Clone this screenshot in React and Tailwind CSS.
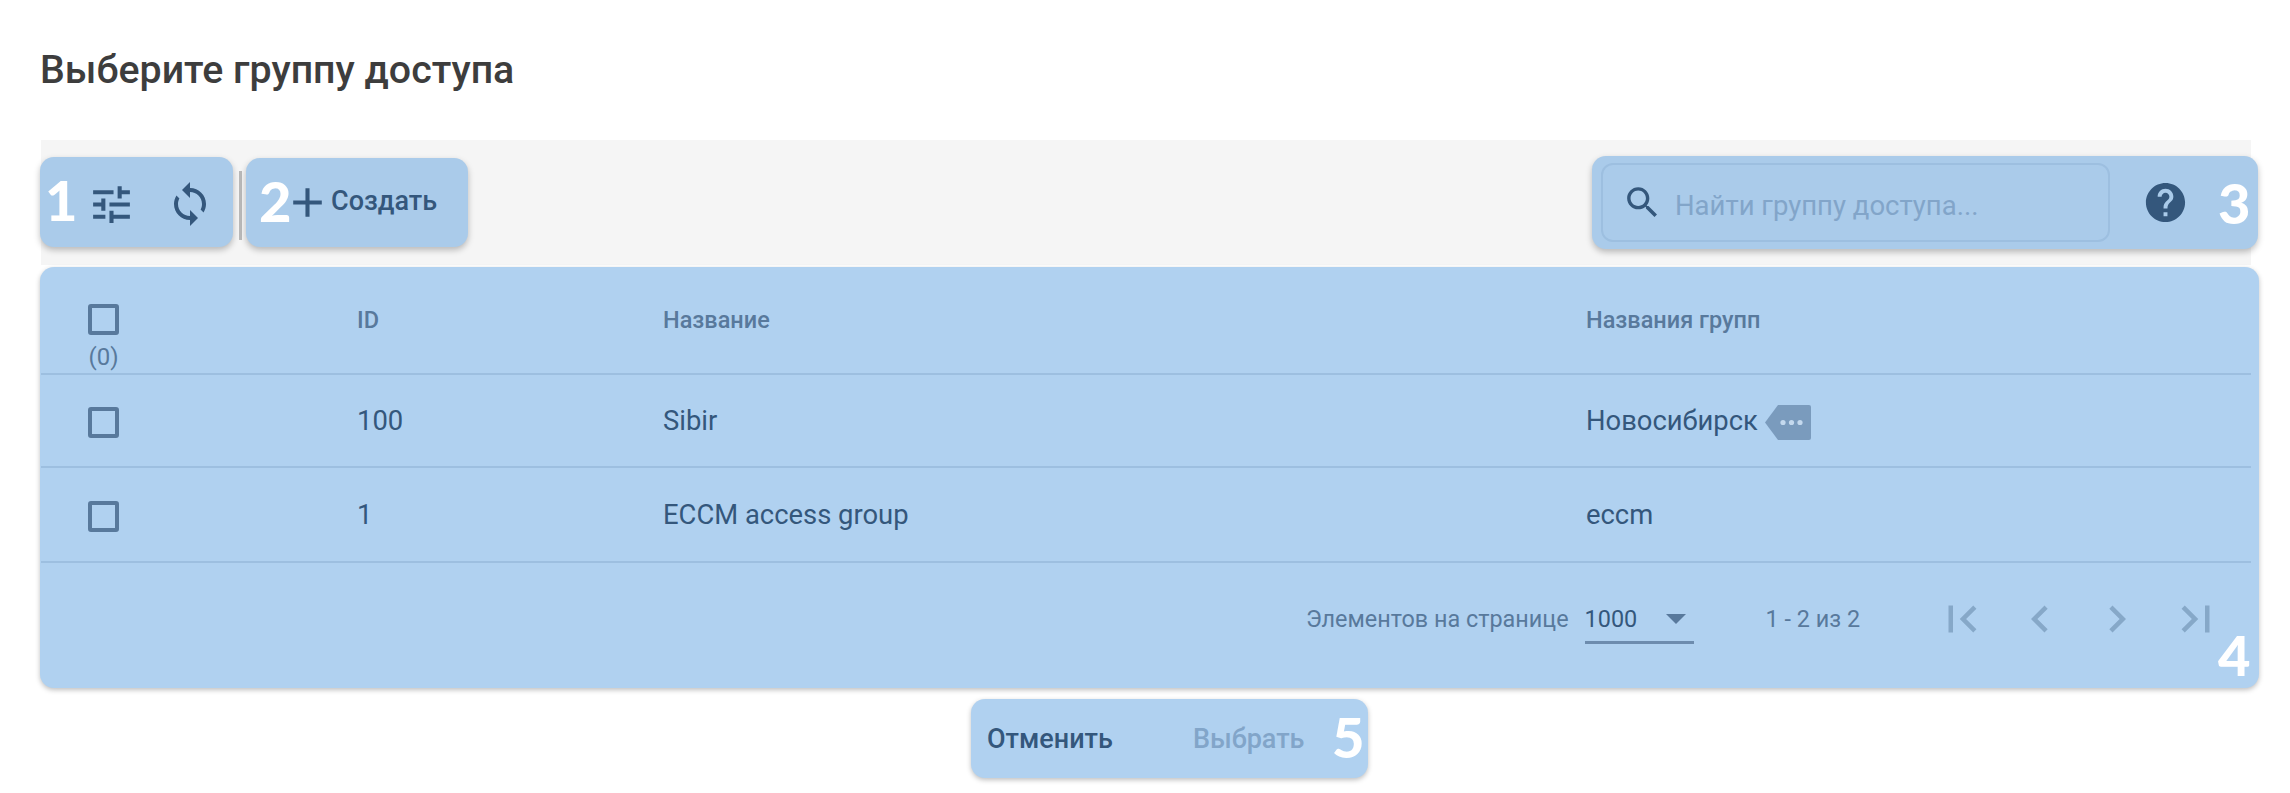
const ICONS = {
  tune: 'M3 17v2h6v-2H3zM3 5v2h10V5H3zm10 16v-2h8v-2h-8v-2h-2v6h2zM7 9v2H3v2h4v2h2V9H7zm14 4v-2H11v2h10zm-6-4h2V7h4V5h-4V3h-2v6z',
  sync: 'M12 4V1L8 5l4 4V6c3.31 0 6 2.69 6 6 0 1.01-.25 1.97-.7 2.8l1.46 1.46C19.54 15.03 20 13.57 20 12c0-4.42-3.58-8-8-8zm0 14c-3.31 0-6-2.69-6-6 0-1.01.25-1.97.7-2.8L5.24 7.74C4.46 8.97 4 10.43 4 12c0 4.42 3.58 8 8 8v3l4-4-4-4v3z',
  plus: 'M19 13h-6v6h-2v-6H5v-2h6V5h2v6h6v2z',
  search: 'M15.5 14h-.79l-.28-.27C15.41 12.59 16 11.11 16 9.5 16 5.91 13.09 3 9.5 3S3 5.91 3 9.5 5.91 16 9.5 16c1.61 0 3.09-.59 4.23-1.57l.27.28v.79l5 4.99L20.49 19l-4.99-5zm-6 0C7.01 14 5 11.99 5 9.5S7.01 5 9.5 5 14 7.01 14 9.5 11.99 14 9.5 14z',
  help: 'M12 2C6.48 2 2 6.48 2 12s4.48 10 10 10 10-4.48 10-10S17.52 2 12 2zm1 17h-2v-2h2v2zm2.07-7.75l-.9.92C13.45 12.9 13 13.5 13 15h-2v-.5c0-1.1.45-2.1 1.17-2.83l1.24-1.26c.37-.36.59-.86.59-1.41 0-1.1-.9-2-2-2s-2 .9-2 2H8c0-2.21 1.79-4 4-4s4 1.79 4 4c0 .88-.36 1.68-.93 2.25z',
  first: 'M18.41 16.59L13.82 12l4.59-4.59L17 6l-6 6 6 6zM6 6h2v12H6z',
  prev: 'M15.41 7.41L14 6l-6 6 6 6 1.41-1.41L10.83 12z',
  next: 'M10 6L8.59 7.41 13.17 12l-4.58 4.58L10 18l6-6z',
  last: 'M5.59 7.41L10.18 12l-4.59 4.59L7 18l6-6-6-6zM16 6h2v12h-2z',
}

function Icon({ name, className }) {
  return (
    <svg viewBox="0 0 24 24" fill="currentColor" className={className}>
      <path d={ICONS[name]} />
    </svg>
  )
}

function Num({ children, className }) {
  return (
    <span className={`absolute font-['Lato',sans-serif] font-black text-[56px] leading-none text-white ${className}`}>
      {children}
    </span>
  )
}

function Checkbox() {
  return <div className="w-[31px] h-[31px] rounded-[3px] border-[4px] border-[#58799c]" />
}

function Row({ id, name, groups, tag, last }) {
  return (
    <div className={`grid grid-cols-[316px_306px_923px_1fr] items-center text-[27.4px] text-[#34577c] border-b-2 border-[#9dbfe0] ${last ? 'h-[95px]' : 'h-[93px]'}`}>
      <div className="pl-[47px] mt-[4px]"><Checkbox /></div>
      <div className="mt-[2px]">{id}</div>
      <div className="mt-[2px]">{name}</div>
      <div className="flex items-center">
        <span className="mt-[2px]">{groups}</span>
        {tag && (
          <svg viewBox="0 0 46 35" className="w-[46px] h-[35px] ml-[7px] mt-[4px]">
            <path d="M13 0H44a2 2 0 0 1 2 2V33a2 2 0 0 1-2 2H13L0 17.5Z" fill="#7a9bbd" />
            <circle cx="18" cy="17.5" r="2.6" fill="#c4d9ee" />
            <circle cx="26.5" cy="17.5" r="2.6" fill="#c4d9ee" />
            <circle cx="35" cy="17.5" r="2.6" fill="#c4d9ee" />
          </svg>
        )}
      </div>
    </div>
  )
}

export default function App() {
  return (
    <div className="w-[2290px] h-[793px] overflow-hidden bg-white font-['Roboto',sans-serif] pl-[40px]">
      <h1 className="h-[140px] pt-[46px] text-[39.3px] leading-[48px] font-medium text-[#3d3d3d]">Выберите группу доступа</h1>

      <div className="w-[2210px] h-[125px] ml-px bg-[#f5f5f5] flex items-start pt-[17px]">
        <div className="relative -ml-px w-[193px] h-[90px] rounded-[14px] bg-[#aacbea] shadow-[0_3px_6px_rgba(0,0,0,0.25)] flex items-center text-[#34577c]">
          <Num className="left-[5px] top-[15px]">1</Num>
          <Icon name="tune" className="w-[49px] h-[49px] ml-[47px] mt-[5px]" />
          <Icon name="sync" className="w-[48px] h-[48px] ml-[30px] mt-[4px]" />
        </div>
        <div className="w-[3px] h-[69px] mt-[14px] ml-[6px] bg-[#b9b9b9]" />
        <div className="relative ml-[4px] mt-px w-[222px] h-[89px] rounded-[14px] bg-[#aacbea] shadow-[0_3px_6px_rgba(0,0,0,0.25)] flex items-center text-[#34577c]">
          <Num className="left-[13px] top-[15px]">2</Num>
          <Icon name="plus" className="w-[49px] h-[49px] ml-[37px] -mt-[1px] shrink-0" />
          <span className="-ml-px -mt-[2px] text-[27px] font-medium">Создать</span>
        </div>
        <div className="relative ml-auto -mr-[7px] w-[666px] h-[93px] -mt-px rounded-[14px] bg-[#aacbea] shadow-[0_3px_6px_rgba(0,0,0,0.25)] flex items-center text-[#34577c]">
          <div className="ml-[9px] w-[509px] h-[79px] rounded-[12px] border-2 border-[#9dbfe0] flex items-center">
            <Icon name="search" className="w-[41px] h-[41px] ml-[19px]" />
            <span className="ml-[12px] mt-[6px] text-[27.5px] text-[#82a5c9]">Найти группу доступа...</span>
          </div>
          <Icon name="help" className="w-[47px] h-[47px] ml-[32px]" />
          <Num className="left-[626px] top-[19px]">3</Num>
        </div>
      </div>

      <div className="relative mt-[2px] w-[2219px] h-[421px] rounded-[14px] bg-[#b0d1f0] shadow-[0_2px_5px_rgba(0,0,0,0.25)] pl-px pr-[8px]">
        <div className="grid grid-cols-[316px_306px_923px_1fr] h-[108px] border-b-2 border-[#9dbfe0] text-[23.5px] font-medium text-[#58799c]">
          <div className="pl-[47px] pt-[37px] relative">
            <Checkbox />
            <span className="absolute left-[47px] top-[72px] w-[31px] text-center text-[24px] font-normal">(0)</span>
          </div>
          <div className="pt-[37px] leading-[32px]">ID</div>
          <div className="pt-[37px] leading-[32px]">Название</div>
          <div className="pt-[37px] leading-[32px]">Названия групп</div>
        </div>
        <Row id="100" name="Sibir" groups="Новосибирск" tag />
        <Row id="1" name="ECCM access group" groups="eccm" last />
        <div className="flex items-start h-[125px] pt-[39px] text-[23.4px] text-[#58799c]">
          <span className="ml-[1265px] leading-[34px]">Элементов на странице</span>
          <div className="ml-[16px] w-[109px] h-[42px] border-b-[3px] border-[#6d8cae] flex items-start relative">
            <span className="leading-[34px] text-[#34577c]">1000</span>
            <span className="absolute left-[81px] top-[12px] w-0 h-0 border-x-[10px] border-x-transparent border-t-[10px] border-t-[#58799c]" />
          </div>
          <span className="ml-[72px] leading-[34px]">1 - 2 из 2</span>
          <div className="flex text-[#86a8c8] -mt-[10px]">
            <Icon name="first" className="w-[54px] h-[54px] ml-[75px]" />
            <Icon name="prev" className="w-[54px] h-[54px] ml-[24px]" />
            <Icon name="next" className="w-[54px] h-[54px] ml-[23px]" />
            <Icon name="last" className="w-[54px] h-[54px] ml-[25px]" />
          </div>
        </div>
        <Num className="left-[2178px] top-[360px]">4</Num>
      </div>

      <div className="relative mt-[11px] ml-[931px] w-[397px] h-[79px] rounded-[14px] bg-[#b0d1f0] shadow-[0_2px_5px_rgba(0,0,0,0.25)] flex items-center text-[27px] font-medium">
        <span className="ml-[16px] mt-[2px] text-[#34577c]">Отменить</span>
        <span className="ml-[80px] mt-[2px] text-[#82a5c9]">Выбрать</span>
        <Num className="left-[361px] top-[10px]">5</Num>
      </div>
    </div>
  )
}
